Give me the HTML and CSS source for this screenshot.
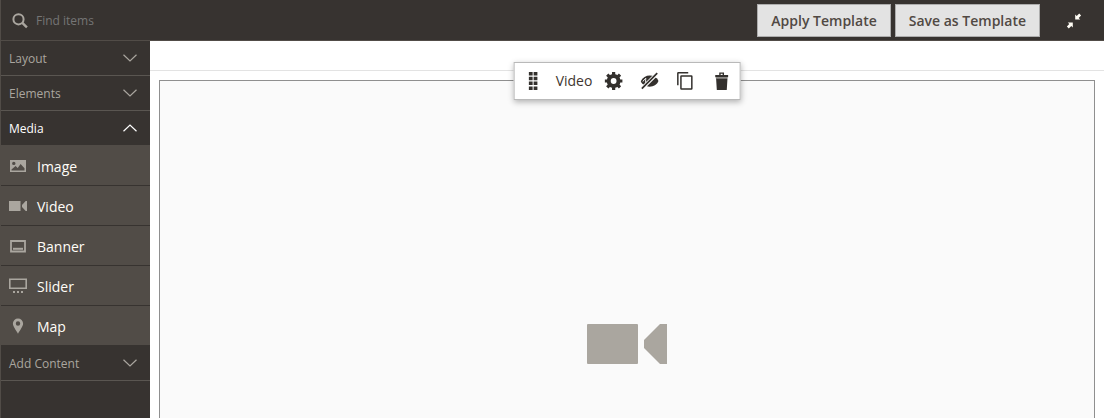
FILE: index.html
```html
<!DOCTYPE html>
<html lang="en">
<head>
<meta charset="utf-8">
<title>Page Builder</title>
<link rel="stylesheet" href="styles.css">
</head>
<body>
<div class="builder">
  <header class="topbar">
    <label class="search">
      <svg class="search-icon" width="16" height="16" viewBox="0 0 16 16" fill="none" stroke="#aaa69f" stroke-width="2" aria-hidden="true"><circle cx="6.5" cy="6.3" r="5.1"/><path d="M10.3 9.8l4.6 4.6" stroke-width="2.4"/></svg>
      <input class="search-input" type="text" placeholder="Find items" aria-label="Find items">
    </label>
    <div class="actions">
      <button class="action" type="button">Apply Template</button>
      <button class="action" type="button">Save as Template</button>
      <button class="collapse" type="button" aria-label="Close full screen">
        <svg width="16" height="16" viewBox="0 0 16 16" fill="#fffdf5" aria-hidden="true"><path d="M9.200 1.400l1.500 1.500L13.200.6l1.900 1.900-2.400 2.400 1.500 1.600h-5zM6.800 9.500v5l-1.500-1.500-2.500 2.400L.9 13.500l2.400-2.500-1.500-1.500z"/></svg>
      </button>
    </div>
  </header>
  <div class="workspace">
    <nav class="sidebar" aria-label="Content types">
      <button class="section" type="button">Layout <svg class="chevron" width="14" height="8" viewBox="0 0 14 8" aria-hidden="true"><path d="M.5.8L7 7 13.5.8"/></svg></button>
      <button class="section" type="button">Elements <svg class="chevron" width="14" height="8" viewBox="0 0 14 8" aria-hidden="true"><path d="M.5.8L7 7 13.5.8"/></svg></button>
      <button class="section section-open" type="button" aria-expanded="true">Media <svg class="chevron" width="14" height="8" viewBox="0 0 14 8" aria-hidden="true"><path d="M.5 7.2L7 1l6.5 6.2"/></svg></button>
      <ul class="items">
        <li class="item"><svg class="item-icon" width="18" height="16" viewBox="0 0 18 16" aria-hidden="true"><path fill="#aaa69f" fill-rule="evenodd" d="M1 2h16v12H1zM2.500 12.500h13v-2.300L11.600 6 8.700 9.900 6.600 8.100 2.500 11.600zM4.800 3.700a1.700 1.700 0 1 0 0 3.400 1.700 1.700 0 0 0 0-3.400z"/></svg>Image</li>
        <li class="item"><svg class="item-icon" width="18" height="16" viewBox="0 0 18 16" fill="#aaa69f" aria-hidden="true"><path d="M0 3h11.5v10H0zM18 3v10h-1.3L13 9V7l3.7-4z"/></svg>Video</li>
        <li class="item"><svg class="item-icon" width="18" height="16" viewBox="0 0 18 16" aria-hidden="true"><path d="M2 3h14v10.500H2z" fill="none" stroke="#aaa69f" stroke-width="1.800"/><path d="M4 9.800h10v2H4z" fill="#aaa69f"/></svg>Banner</li>
        <li class="item"><svg class="item-icon" width="18" height="16" viewBox="0 0 18 16" aria-hidden="true"><path d="M.8 1.300h16.400v9H.8z" fill="none" stroke="#aaa69f" stroke-width="1.600"/><path d="M4 13h2v2H4zM8 13h2v2H8zM12 13h2v2h-2z" fill="#aaa69f"/></svg>Slider</li>
        <li class="item"><svg class="item-icon" width="18" height="16" viewBox="0 0 18 16" aria-hidden="true"><path fill="#aaa69f" fill-rule="evenodd" d="M9 .5a5.100 5.100 0 0 1 5.100 5.100c0 3-3.100 6.500-5.100 10.200C7 12.100 3.900 8.600 3.900 5.600A5.100 5.100 0 0 1 9 .5zM9 3.300a2.200 2.200 0 1 0 0 4.400 2.200 2.200 0 0 0 0-4.400z"/></svg>Map</li>
      </ul>
      <button class="section" type="button">Add Content <svg class="chevron" width="14" height="8" viewBox="0 0 14 8" aria-hidden="true"><path d="M.5.8L7 7 13.5.8"/></svg></button>
    </nav>
    <main class="stage">
      <div class="stage-head"></div>
      <section class="video-block" aria-label="Video">
        <div class="options">
          <svg width="9" height="18" viewBox="0 0 9 18" fill="#33302d" aria-hidden="true"><path d="M0 0h4v3.500H0zM5 0h4v3.500H5zM0 4.800h4v3.500H0zM5 4.800h4v3.500H5zM0 9.600h4v3.500H0zM5 9.600h4v3.500H5zM0 14.400h4v3.500H0zM5 14.400h4v3.500H5z"/></svg>
          <span class="options-title">Video</span>
          <button class="tool" type="button" aria-label="Settings"><svg width="18" height="18" viewBox="0 0 18 18" aria-hidden="true"><circle cx="9" cy="9" r="4.900" fill="none" stroke="#33302d" stroke-width="4"/><path stroke="#33302d" stroke-width="3.200" d="M9 0v4M9 14v4M0 9h4M14 9h4M2.600 2.600l2.800 2.800M12.600 12.600l2.800 2.800M2.600 15.400l2.800-2.800M12.600 5.400l2.800-2.800"/></svg></button>
          <button class="tool" type="button" aria-label="Hide"><svg width="18" height="18" viewBox="0 0 18 18" aria-hidden="true"><path fill="#33302d" d="M0 9.500C2 5.500 5.500 3.600 9 3.600c4 0 7.200 2 9 5.400-1.800 3.600-5 5.700-9 5.700-4 0-7-1.800-9-5.200z"/><path fill="none" stroke="#fff" stroke-width="1" d="M2.300 9.500c.8-1.500 1.700-2.400 3-3.100-.5 1.800-.4 3.200.1 4.600"/><path stroke="#fff" stroke-width="3.600" d="M.5 17.500l17-17"/><path stroke="#33302d" stroke-width="1.700" d="M1.200 16.600L16.600 1.200"/></svg></button>
          <button class="tool" type="button" aria-label="Duplicate"><svg width="18" height="18" viewBox="0 0 18 18" fill="none" stroke="#33302d" stroke-width="1.500" aria-hidden="true"><path d="M1.200 13.200V1.300q0-.5.500-.5h9.900"/><rect x="4.300" y="3.900" width="10.900" height="13.200" rx=".5"/></svg></button>
          <button class="tool" type="button" aria-label="Remove"><svg width="18" height="18" viewBox="0 0 18 18" aria-hidden="true"><path fill="#33302d" d="M3.500 7h11.300l-.7 11H4.200z"/><path fill="#33302d" fill-rule="evenodd" d="M6.600 3V.4h4.800V3h4.100v2.200H2.600V3zM8 3h2V1.700H8z"/><path fill="#777470" d="M3.300 5.200h11.600V7H3.300z"/></svg></button>
        </div>
        <svg class="placeholder" width="80" height="40" viewBox="0 0 80 40" fill="#aaa69f" aria-hidden="true"><rect width="51" height="40" rx="1"/><path d="M80 0v40h-7L57 24v-8L73 0z"/></svg>
      </section>
    </main>
  </div>
</div>
</body>
</html>
```

FILE: styles.css
```css
* {
  box-sizing: border-box;
}

body {
  margin: 0;
  font-family: "Open Sans", "Noto Sans", sans-serif;
  background: #fff;
}

button {
  margin: 0;
  padding: 0;
  border: 0;
  font: inherit;
  color: inherit;
  background: none;
  cursor: pointer;
}

svg {
  display: block;
  flex: none;
}

.builder {
  display: flex;
  flex-direction: column;
  height: 100vh;
  overflow: hidden;
}

.topbar {
  flex: none;
  display: flex;
  align-items: center;
  justify-content: space-between;
  padding: 4px 22px 3px 11px;
  border-left: 1px solid #514c47;
  border-bottom: 1px solid #514c47;
  background: #373330;
}

.search {
  display: flex;
  align-items: center;
  gap: 8px;
}

.search-input {
  width: 200px;
  padding: 0;
  border: 0;
  outline: 0;
  font: 12px/20px "Open Sans", "Noto Sans", sans-serif;
  color: #fff;
  background: none;
}

.search-input::placeholder {
  color: #757575;
  opacity: 1;
}

.actions {
  display: flex;
  align-items: center;
  gap: 4px;
}

.action {
  padding: 6px 13px;
  border: 1px solid #adadad;
  font-size: 14px;
  font-weight: 600;
  line-height: 19px;
  color: #514943;
  background: #e3e3e3;
}

.collapse {
  margin-left: 22px;
}

.workspace {
  flex: 1;
  display: flex;
  min-height: 0;
}

.sidebar {
  flex: none;
  width: 150px;
  border-left: 1px solid #514c47;
  background: #373330;
}

.section {
  display: flex;
  align-items: center;
  justify-content: space-between;
  width: 100%;
  padding: 9px 13px 7px 8px;
  border-bottom: 1px solid #5a5651;
  font-size: 12px;
  line-height: 18px;
  color: #aaa69f;
}

.section-open {
  font-weight: 500;
  color: #fff;
  border-bottom-color: #514c47;
}

.chevron {
  margin-bottom: 2px;
  fill: none;
  stroke: currentColor;
  stroke-width: 1.2;
}

.items {
  margin: 0;
  padding: 0;
  list-style: none;
  background: #514c47;
}

.item {
  display: flex;
  align-items: center;
  gap: 10px;
  padding: 11px 8px 8px;
  border-bottom: 1px solid #373330;
  font-size: 14px;
  font-weight: 500;
  line-height: 20px;
  color: #fffdf8;
}

.item-icon {
  margin-bottom: 2px;
}

.stage {
  flex: 1;
  display: flex;
  flex-direction: column;
  min-width: 0;
}

.stage-head {
  flex: none;
  height: 30px;
  border-bottom: 1px solid #e3e3e3;
}

.video-block {
  position: relative;
  flex: 1;
  display: flex;
  justify-content: center;
  align-items: flex-start;
  margin: 9px 9px 0;
  padding-top: 243px;
  border: 1px solid #8f8f8f;
  border-bottom: 0;
  background: #fafafa;
}

.options {
  position: absolute;
  top: -19px;
  left: 50%;
  transform: translateX(-50%);
  display: flex;
  align-items: center;
  gap: 18px;
  padding: 8px 9px 8px 14px;
  border: 1px solid #b9b9b9;
  background: #fff;
  box-shadow: 0 2px 6px rgba(0, 0, 0, 0.3);
}

.options-title {
  margin-right: -6px;
  font-size: 14px;
  line-height: 20px;
  color: #41362f;
}
```
